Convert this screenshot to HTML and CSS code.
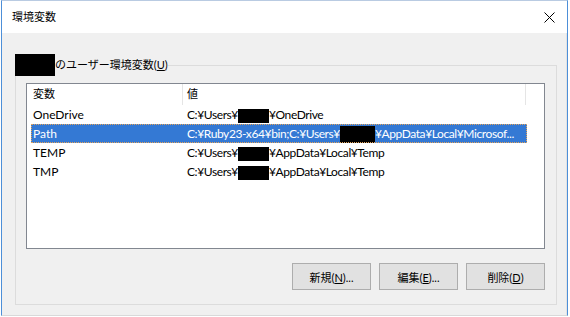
FILE: index.html
```html
<!DOCTYPE html>
<html lang="ja">

<head>
    <meta charset="UTF-8">
    <meta name="viewport" content="width=device-width, initial-scale=1.0">
    <title>環境変数</title>
    <link rel="stylesheet" href="styles.css">
</head>

<body>
    <div class="window">
        <div class="titlebar">
            <span class="title">環境変数</span>
            <span class="close">
                <svg width="11" height="11" viewBox="0 0 11 11">
                    <path d="M0.5 0.5 L10.5 10.5 M10.5 0.5 L0.5 10.5" stroke="#000" stroke-width="1" fill="none" />
                </svg>
            </span>
        </div>
        <div class="content">
            <fieldset class="group">
                <legend><span class="mask user"></span>のユーザー環境変数(<u>U</u>)</legend>

                <div class="listbox">
                    <div class="header">
                        <div class="hcol name">変数</div>
                        <div class="hcol value">値</div>
                    </div>
                    <ul class="rows">
                        <li>
                            <span class="cell name">OneDrive</span>
                            <span class="cell value">C:¥Users¥<span class="mask"></span>¥OneDrive</span>
                        </li>
                        <li class="selected">
                            <span class="cell name">Path</span>
                            <!-- 一覧では末尾が省略表示される -->
                            <span class="cell value">C:¥Ruby23-x64¥bin;C:¥Users¥<span class="mask tall"></span>¥AppData¥Local¥Microsof...</span>
                        </li>
                        <li>
                            <span class="cell name">TEMP</span>
                            <span class="cell value">C:¥Users¥<span class="mask"></span>¥AppData¥Local¥Temp</span>
                        </li>
                        <li>
                            <span class="cell name">TMP</span>
                            <span class="cell value">C:¥Users¥<span class="mask"></span>¥AppData¥Local¥Temp</span>
                        </li>
                    </ul>
                </div>

                <div class="buttons">
                    <button>新規(<u>N</u>)...</button>
                    <button>編集(<u>E</u>)...</button>
                    <button>削除(<u>D</u>)</button>
                </div>
            </fieldset>
        </div>
    </div>
</body>

</html>
```

FILE: styles.css
```css
* {
    margin: 0;
    padding: 0;
    box-sizing: border-box;
    list-style: none;
}

body {
    background-color: #fff;
    font-family: Lato, "Noto Sans CJK JP", sans-serif;
    font-size: 12px;
    color: #000;
}

.window {
    margin-left: 1px;
    width: 567px;
    height: 316px;
    border-left: 1px solid #4d8fd8;
    border-right: 1px solid #4d8fd8;
    border-top: 1px solid #b9cbe2;
    border-bottom: 1px solid #d9d9d9;
    display: flex;
    flex-direction: column;
}

.titlebar {
    height: 32px;
    background-color: #fff;
    display: flex;
    align-items: center;
    justify-content: space-between;
    padding: 0 12px 0 10px;
}

.title {
    font-size: 11px;
    line-height: 16px;
}

.close {
    display: flex;
}

.content {
    flex: 1;
    background-color: #f0f0f0;
    padding: 21px 9px 0 13px;
    border-right: 1px solid #e3e3e3;
}

.group {
    border: 1px solid #dcdcdc;
    padding: 7px 10px 14px 10px;
}

.group legend {
    margin-left: -11px;
    padding: 0;
    font-size: 11px;
    line-height: 22px;
    display: flex;
    align-items: center;
}

.mask {
    display: inline-block;
    width: 31px;
    height: 14px;
    background-color: #000;
    vertical-align: middle;
}

.mask.user {
    width: 40px;
    height: 22px;
}

.mask.tall {
    width: 35px;
    height: 18px;
}

.listbox {
    width: 519px;
    height: 166px;
    border: 1px solid #828790;
    background-color: #fff;
}

.header {
    display: flex;
    height: 21px;
}

.hcol {
    font-size: 11px;
    line-height: 20px;
}

.hcol.name {
    width: 156px;
    padding-left: 6px;
    border-right: 1px solid #e5e5e5;
}

.hcol.value {
    width: 343px;
    padding-left: 4px;
    border-right: 1px solid #e5e5e5;
}

.rows li {
    display: flex;
    height: 19px;
    line-height: 19px;
    margin-left: 4px;
    width: 496px;
}

.cell.name {
    width: 152px;
    padding-left: 2px;
}

.cell.value {
    width: 344px;
    padding-left: 4px;
    white-space: nowrap;
    overflow: hidden;
    letter-spacing: -0.4px;
}

.rows li.selected {
    background-color: #3479d4;
    color: #fff;
    outline: 1px dotted #e3a35a;
    outline-offset: -1px;
}

.buttons {
    display: flex;
    justify-content: flex-end;
    gap: 8px;
    margin-top: 14px;
    width: 519px;
}

.buttons button {
    width: 79px;
    height: 27px;
    background-color: #e1e1e1;
    border: 1px solid #adadad;
    font-family: Lato, "Noto Sans CJK JP", sans-serif;
    font-size: 11px;
    color: #000;
}
```
